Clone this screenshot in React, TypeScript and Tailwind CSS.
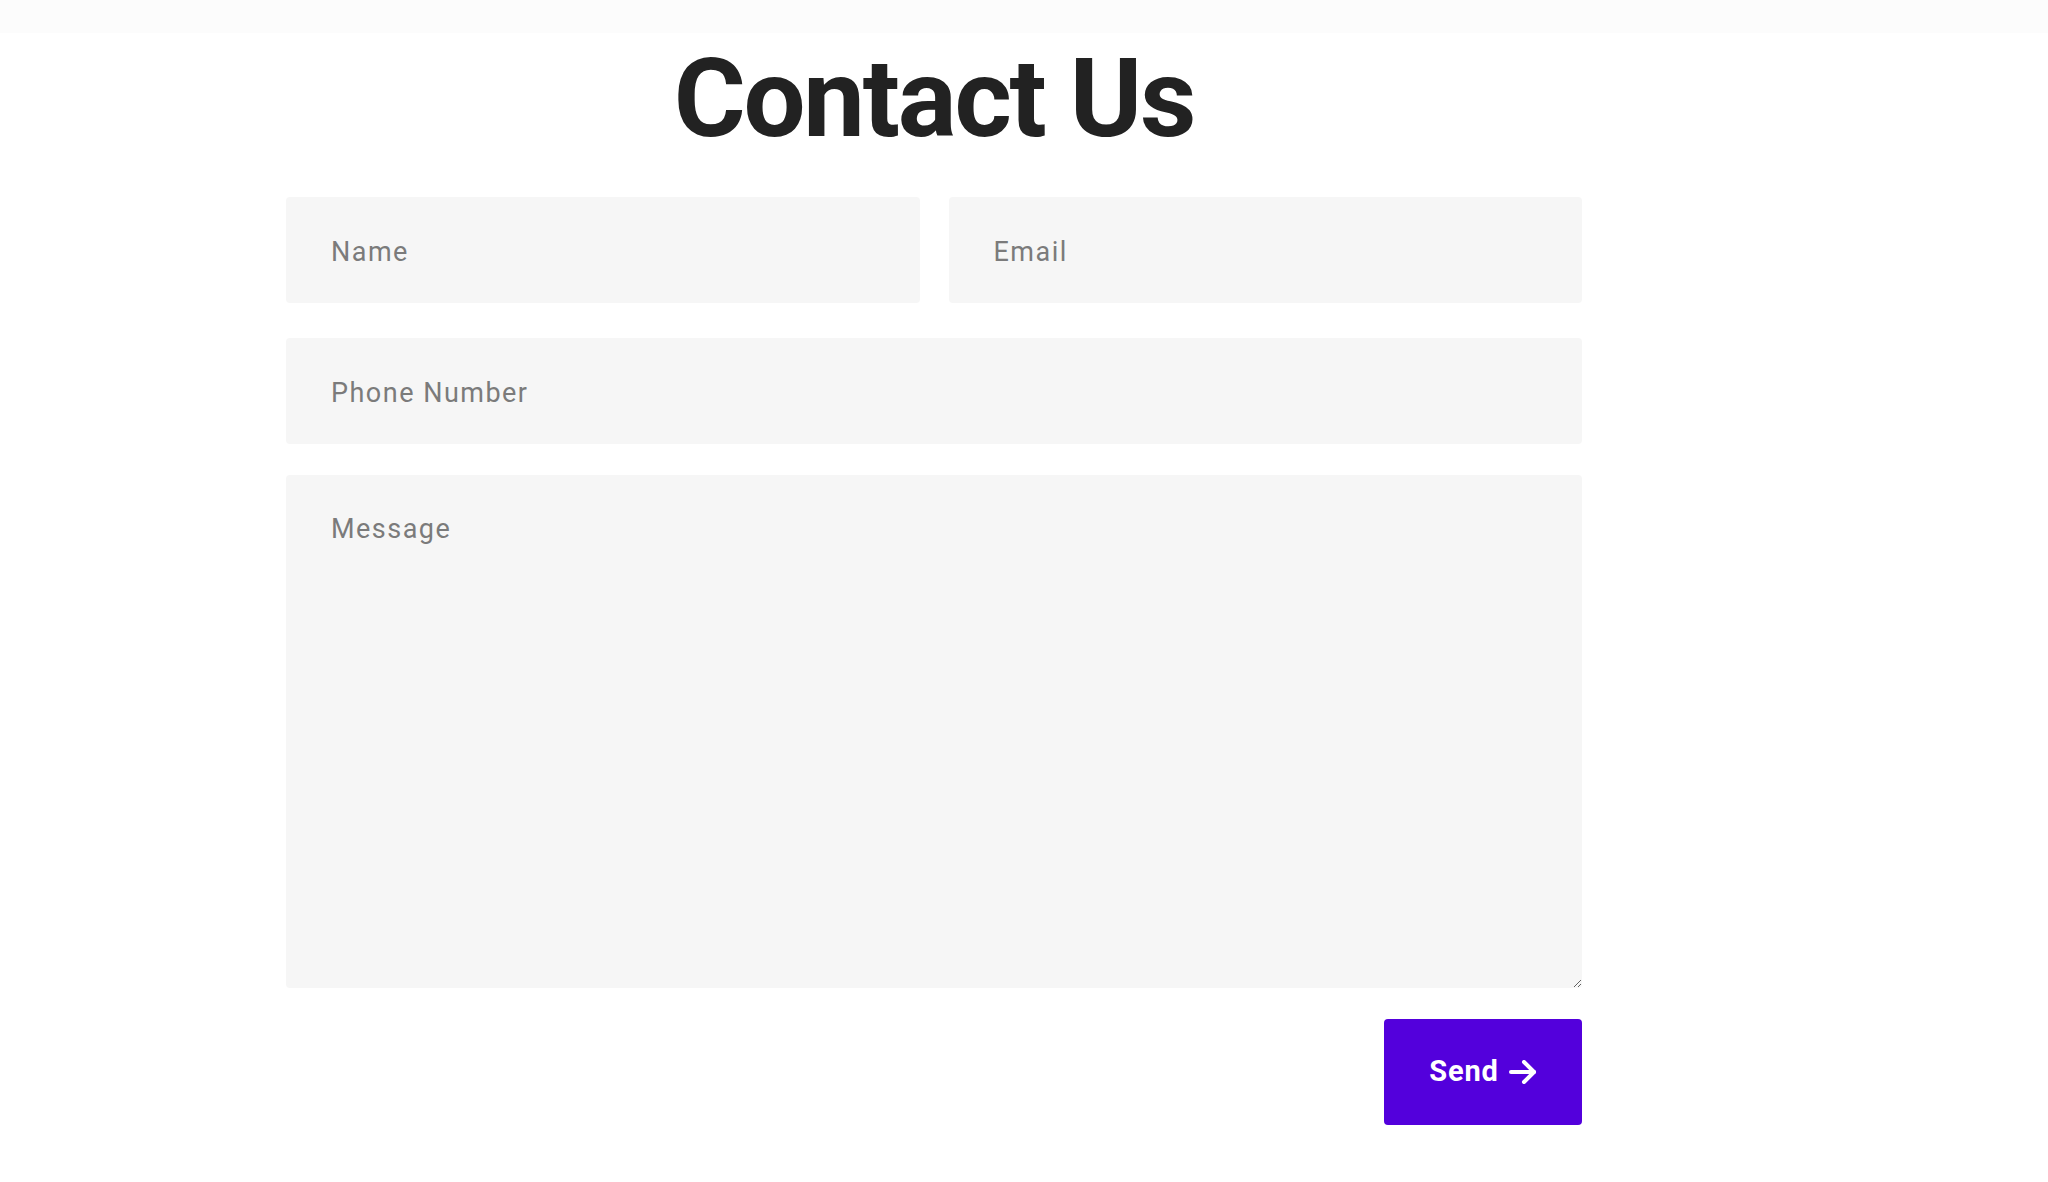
import React, { useState } from 'react';

export default function App() {
    const [name, setName] = useState('');
    const [email, setEmail] = useState('');
    const [phone, setPhone] = useState('');
    const [message, setMessage] = useState('');

    const field =
        'h-[106px] w-full rounded-[4px] bg-[#f6f6f6] pt-[4px] pl-[45px] pr-6 text-[27px] tracking-[0.055em] text-[#333] outline-none placeholder:text-[#7b7b7b]';

    return (
        <div className="min-h-screen bg-white" style={{ fontFamily: 'Roboto, "Noto Sans", sans-serif' }}>
            <div className="h-[33px] bg-[#fcfcfc]" />

            <div className="ml-[286px] w-[1296px] pb-[56px]">
                <h1 className="mt-[11px] text-center text-[110px] font-bold leading-none tracking-[-0.02em] text-[#222]">
                    Contact Us
                </h1>

                <form className="mt-[43px] flex flex-col" onSubmit={(e) => e.preventDefault()}>
                    <div className="grid grid-cols-2 gap-[29px]">
                        <input
                            type="text"
                            value={name}
                            onChange={(e) => setName(e.target.value)}
                            placeholder="Name"
                            className={field}
                        />
                        <input
                            type="email"
                            value={email}
                            onChange={(e) => setEmail(e.target.value)}
                            placeholder="Email"
                            className={field}
                        />
                    </div>

                    <input
                        type="tel"
                        value={phone}
                        onChange={(e) => setPhone(e.target.value)}
                        placeholder="Phone Number"
                        className={`${field} mt-[35px]`}
                    />

                    <textarea
                        value={message}
                        onChange={(e) => setMessage(e.target.value)}
                        placeholder="Message"
                        className="mt-[31px] block h-[513px] w-full rounded-[4px] bg-[#f6f6f6] pt-[34px] pl-[45px] pr-6 text-[27px] leading-[1.5] tracking-[0.055em] text-[#333] outline-none placeholder:text-[#7b7b7b]"
                    />

                    <div className="mt-[31px] flex justify-end">
                        <button
                            type="submit"
                            className="flex h-[106px] w-[198px] items-center justify-center gap-[10px] rounded-[4px] bg-[#5300dc] text-[29px] font-bold tracking-[0.03em] text-white"
                        >
                            Send
                            <svg width="28" height="24" viewBox="0 0 28 24" fill="none" stroke="currentColor" strokeWidth="4" strokeLinecap="round" strokeLinejoin="round">
                                <path d="M2 12h23" />
                                <path d="M15 2l10 10-10 10" />
                            </svg>
                        </button>
                    </div>
                </form>
            </div>
        </div>
    );
}
